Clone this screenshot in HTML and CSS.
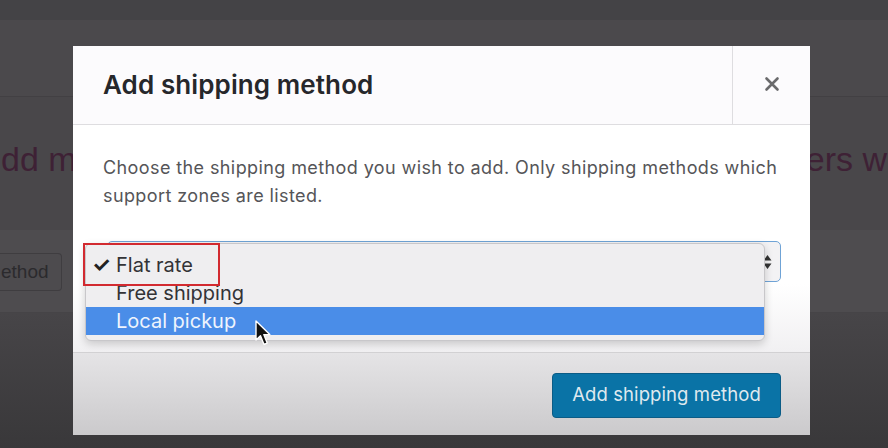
FILE: index.html
```html
<!DOCTYPE html>
<html>
<head>
<meta charset="utf-8">
<link rel="stylesheet" href="styles.css">
</head>
<body>
<div class="page">
  <div class="topstrip"></div>
  <div class="headband"></div>
  <div class="content">
    <div class="bg-title">
      <span class="bg-left">dd mu</span>
      <span class="bg-right">ners w</span>
    </div>
  </div>
  <div class="toolbar">
    <span class="bg-btn">ethod</span>
  </div>
  <div class="bottom"></div>
</div>

<div class="modal">
  <header class="modal-head">
    <h1 class="modal-title">Add shipping method</h1>
    <button class="modal-close" aria-label="Close">
      <svg width="16" height="16" viewBox="0 0 16 16"><path d="M2.5 2.5 L13.5 13.5 M13.5 2.5 L2.5 13.5" stroke="#6a6a6c" stroke-width="2.6" stroke-linecap="round"/></svg>
    </button>
  </header>
  <section class="modal-body">
    <p class="desc">Choose the shipping method you wish to add. Only shipping methods which support zones are listed.</p>
    <div class="select">
      <svg class="arrows" width="9" height="16" viewBox="0 0 9 16"><path d="M4.5 1 L8.5 6.5 L0.5 6.5 Z M4.5 15 L8.5 9.5 L0.5 9.5 Z" fill="#333"/></svg>
    </div>
  </section>
  <footer class="modal-foot">
    <button class="primary">Add shipping method</button>
  </footer>
</div>

<ul class="menu">
  <li class="item"><span class="check">✓</span>Flat rate</li>
  <li class="item">Free shipping</li>
  <li class="item active">Local pickup</li>
</ul>
<div class="redbox"></div>
<svg class="cursor" width="18" height="27" viewBox="0 0 18 27"><path d="M1 1 L1 20 L5.5 15.8 L9 24.5 L12.2 23.1 L8.8 14.6 L14.8 14.6 Z" fill="#111" stroke="#fff" stroke-width="1.4" stroke-linejoin="round"/></svg>
</body>
</html>
```

FILE: styles.css
```css
* { box-sizing: border-box; }
html, body { margin: 0; padding: 0; }
body {
  width: 888px; height: 448px; overflow: hidden;
  font-family: Inter, "Noto Sans", "Liberation Sans", sans-serif;
  background: #3b3a3c;
  position: relative;
}
.page { display: flex; flex-direction: column; height: 448px; }
.topstrip { height: 20px; background: #444346; }
.headband { height: 77px; background: #4b494c; border-bottom: 1px solid #424043; }
.content { height: 133px; background: #49474a; }
.bg-title {
  display: flex; justify-content: space-between; align-items: center;
  height: 100%; padding: 0 1px 2px 1px;
  font-family: "Liberation Sans", sans-serif; font-size: 34px; color: #3e2135;
  overflow: hidden; white-space: nowrap;
}
.bg-left { margin-top: -6px; }
.bg-right { margin-top: -6px; }
.toolbar {
  height: 83px; background: #4e4c4f; border-bottom: 1px solid #464447;
  display: flex; align-items: center;
}
.bg-btn {
  height: 38px; width: 62px; padding: 0 0 0 1px; margin-top: 2px;
  border: 1px solid #3f3d40; border-left: 0; border-radius: 0 4px 4px 0; background: #4d4b4e;
  display: flex; align-items: center;
  font-family: "Liberation Sans", sans-serif; font-size: 19px; color: #2b2a2d;
}
.bottom { flex: 1; background: linear-gradient(#474548, #39383a); }

.modal {
  position: absolute; left: 73px; top: 46px; width: 737px; height: 389px;
  display: flex; flex-direction: column;
  background: #fff;
}
.modal-head {
  height: 79px; display: flex; align-items: stretch;
  background: #fcfbfd; border-bottom: 1px solid #dedde0;
}
.modal-title {
  flex: 1; margin: 0; padding-left: 30px; display: flex; align-items: center;
  font-size: 26px; font-weight: 600; color: #26272b; letter-spacing: 0.1px;
  padding-bottom: 1px;
}
.modal-close {
  width: 78px; border: 0; border-left: 1px solid #dedde0; background: transparent;
  display: flex; align-items: center; justify-content: center; padding: 0 0 2px 0;
}
.modal-body {
  height: 227px; padding: 29px 20px 0 30px;
  background: linear-gradient(#ffffff 0%, #ffffff 70%, #f1f0f2 100%);
}
.desc {
  margin: 0; font-size: 18px; line-height: 28px; color: #555558;
  letter-spacing: 0.4px;
}
.select {
  margin-top: 31px; margin-left: 4px; margin-right: 9px; height: 41px;
  border: 1px solid #6fa3d6; border-radius: 5px; background: #f3f2f4;
  display: flex; align-items: center; justify-content: flex-end; padding-right: 8px;
}
.modal-foot {
  flex: 1; display: flex; align-items: center; justify-content: flex-end;
  padding: 2px 29px 0 0;
  border-top: 1px solid #d2d1d3;
  background: linear-gradient(#e5e4e6, #cbcacc);
}
.primary {
  width: 229px; height: 45px; border: 1px solid #0b5c86; border-radius: 4px;
  background: #0a73a6; color: #dfe9ef;
  font-family: Inter, "Noto Sans", sans-serif; font-size: 18.5px; letter-spacing: 0.1px;
  padding: 0 0 2px 0;
}

.menu {
  position: absolute; left: 85px; top: 243px; width: 680px; height: 98px;
  margin: 0; padding: 7px 0; list-style: none;
  background: #efeef0; border: 1px solid #c8c7ca; border-radius: 6px;
  box-shadow: 0 3px 8px rgba(0,0,0,0.18);
}
.item {
  height: 28px; display: flex; align-items: center; position: relative;
  padding-left: 30px; font-size: 20px; color: #333336; padding-bottom: 1px;
}
.item.active { background: #4a8de8; color: #eef4fd; }
.check { position: absolute; left: 6px; top: 1px; font-size: 21px; font-weight: 700; color: #222; }
.redbox {
  position: absolute; left: 83px; top: 243px; width: 137px; height: 43px;
  border: 2px solid #d22a30;
}
.cursor { position: absolute; left: 255px; top: 320px; }
```
